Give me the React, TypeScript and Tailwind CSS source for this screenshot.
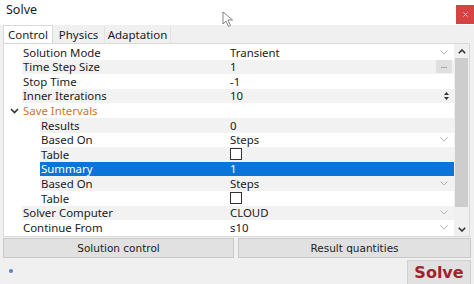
import React from "react";

type Row = {
  name: string;
  value?: string;
  level: 0 | 1;
  kind?: "dropdown" | "check" | "dots" | "spin" | "group" | "text";
  selected?: boolean;
};

const rows: Row[] = [
  { name: "Solution Mode", value: "Transient", level: 0, kind: "dropdown" },
  { name: "Time Step Size", value: "1", level: 0, kind: "dots" },
  { name: "Stop Time", value: "-1", level: 0, kind: "text" },
  { name: "Inner Iterations", value: "10", level: 0, kind: "spin" },
  { name: "Save Intervals", level: 0, kind: "group" },
  { name: "Results", value: "0", level: 1, kind: "text" },
  { name: "Based On", value: "Steps", level: 1, kind: "dropdown" },
  { name: "Table", level: 1, kind: "check" },
  { name: "Summary", value: "1", level: 1, kind: "text", selected: true },
  { name: "Based On", value: "Steps", level: 1, kind: "dropdown" },
  { name: "Table", level: 1, kind: "check" },
  { name: "Solver Computer", value: "CLOUD", level: 0, kind: "dropdown" },
  { name: "Continue From", value: "s10", level: 0, kind: "dropdown" },
];

function Chevron({ color = "#b5b5b5", w = 8, sw = 1 }: { color?: string; w?: number; sw?: number }) {
  return (
    <svg width={w} height={5} viewBox="0 0 8 5">
      <path d="M0.5 0.5 L4 4 L7.5 0.5" fill="none" stroke={color} strokeWidth={sw} />
    </svg>
  );
}

function GridRow({ row, index }: { row: Row; index: number }) {
  const alt = index % 2 === 1;
  const bg = row.selected ? "bg-[#0a74d8]" : alt ? "bg-[#f2f2f2]" : "bg-white";
  const indent = row.level === 0 ? "w-[18px]" : "w-[36px]";
  const nameW = row.level === 0 ? "w-[206px]" : "w-[188px]";
  const nameColor = row.kind === "group" ? "text-[#d2732e]" : row.selected ? "text-white" : "text-[#1a1a1a]";
  return (
    <div className="flex h-[14.6px] items-center">
      <div className={`${indent} h-full bg-white flex items-center pl-[6px]`}>
        {row.kind === "group" && (
          <svg width="9" height="6" viewBox="0 0 9 6">
            <path d="M1 1 L4.5 4.5 L8 1" fill="none" stroke="#333" strokeWidth="1.6" />
          </svg>
        )}
      </div>
      <div className={`flex flex-1 h-full items-center ${bg}`}>
        <div className={`${nameW} pl-[1px] ${nameColor} leading-none`}>{row.name}</div>
        <div className={`flex-1 h-full flex items-center pl-[2px] pr-[2px] ${row.selected ? "text-white" : "text-[#1a1a1a]"}`}>
          {row.kind === "check" ? (
            <div className="w-[12px] h-[12px] border border-[#333] bg-white" />
          ) : (
            <span className="leading-none">{row.value}</span>
          )}
          <div className="ml-auto flex items-center h-full">
            {row.kind === "dropdown" && (
              <div className="pr-[4px]">
                <Chevron />
              </div>
            )}
            {row.kind === "dots" && (
              <div className="w-[16px] h-[13px] bg-[#e0e0e0] flex items-center justify-center text-[8px] text-[#555] leading-none pb-[3px]">
                ...
              </div>
            )}
            {row.kind === "spin" && (
              <div className="w-[9px] h-[13px] flex flex-col items-center justify-center gap-[2px] mr-[1px]">
                <svg width="5" height="3" viewBox="0 0 5 3">
                  <path d="M0 3 L2.5 0 L5 3 Z" fill="#333" />
                </svg>
                <svg width="5" height="3" viewBox="0 0 5 3">
                  <path d="M0 0 L2.5 3 L5 0 Z" fill="#333" />
                </svg>
              </div>
            )}
          </div>
        </div>
      </div>
    </div>
  );
}

export default function App() {
  return (
    <div
      className="relative w-[474px] h-[284px] bg-[#f0f0f0] overflow-hidden text-[11.4px]"
      style={{ fontFamily: '"Noto Sans", "Open Sans", sans-serif' }}
    >
      {/* Title bar */}
      <div className="h-[25px] bg-white flex items-start">
        <div className="pl-[6px] pt-[4px] text-[12.5px] text-[#1a1a1a] leading-none">Solve</div>
        <div className="ml-auto mt-[5px] w-[18px] h-[19px] bg-[#d54343] flex items-center justify-center">
          <svg width="5" height="5" viewBox="0 0 5 5">
            <path d="M0.5 0.5 L4.5 4.5 M4.5 0.5 L0.5 4.5" stroke="#f5d0d0" strokeWidth="1" />
          </svg>
        </div>
      </div>

      {/* mouse cursor */}
      <svg className="absolute left-[222px] top-[11px]" width="12" height="17" viewBox="0 0 12 17">
        <path d="M1 1 L1 13 L4 10 L6.5 15.5 L8.5 14.5 L6 9 L10.5 9 Z" fill="#fff" stroke="#777" strokeWidth="0.9" strokeLinejoin="round" />
      </svg>

      {/* Tabs */}
      <div className="h-[18px] flex items-end pl-[3px] text-[11.5px]">
        <div className="w-[50px] h-[18px] bg-white border border-b-0 border-[#d9d9d9] flex items-center justify-center leading-none text-[#1a1a1a]">
          Control
        </div>
        <div className="w-[52px] h-[17px] border-r border-[#e2e2e2] flex items-center justify-center leading-none text-[#1a1a1a]">
          Physics
        </div>
        <div className="w-[66px] h-[17px] border-r border-[#e2e2e2] flex items-center justify-center leading-none text-[#1a1a1a]">
          Adaptation
        </div>
      </div>

      {/* Property grid */}
      <div className="ml-[3px] w-[467px] h-[194px] border border-[#d9d9d9] bg-white flex">
        <div className="w-[450px] pt-[1px]">
          {rows.map((r, i) => (
            <GridRow key={i} row={r} index={i} />
          ))}
        </div>
        <div className="w-[15px] h-full bg-[#f0f0f0] flex flex-col items-center">
          <div className="h-[14px] flex items-center justify-center">
            <svg width="8" height="5" viewBox="0 0 8 5">
              <path d="M0.8 4.2 L4 1 L7.2 4.2" fill="none" stroke="#333" strokeWidth="1.6" />
            </svg>
          </div>
          <div className="w-[13px] h-[149px] bg-[#cdcdcd]" />
          <div className="flex-1" />
          <div className="h-[14px] flex items-center justify-center">
            <svg width="8" height="5" viewBox="0 0 8 5">
              <path d="M0.8 0.8 L4 4 L7.2 0.8" fill="none" stroke="#333" strokeWidth="1.6" />
            </svg>
          </div>
        </div>
      </div>

      {/* Buttons */}
      <div
        className="flex gap-[4px] px-[3px] mt-[1px] text-[10.5px] text-[#222]"
        style={{ fontFamily: '"DejaVu Sans", "Noto Sans", sans-serif' }}
      >
        <div className="w-[231px] h-[20px] bg-[#e1e1e1] border border-[#c9c9c9] flex items-center justify-center leading-none">
          Solution control
        </div>
        <div className="flex-1 h-[20px] bg-[#e1e1e1] border border-[#c9c9c9] flex items-center justify-center leading-none">
          Result quantities
        </div>
      </div>

      {/* Bottom */}
      <div className="flex items-start px-[3px] mt-[2px]">
        <div className="mt-[9px] ml-[6px] w-[4px] h-[4px] rounded-full bg-[#5a7fcf]" />
        <div
          className="ml-auto w-[64px] h-[28px] bg-[#e1e1e1] border border-[#d0d0d0] flex items-center justify-center text-[16px] font-bold text-[#a3222b] leading-none pb-[2px]"
          style={{ fontFamily: '"DejaVu Sans", "Noto Sans", sans-serif' }}
        >
          Solve
        </div>
      </div>
    </div>
  );
}
